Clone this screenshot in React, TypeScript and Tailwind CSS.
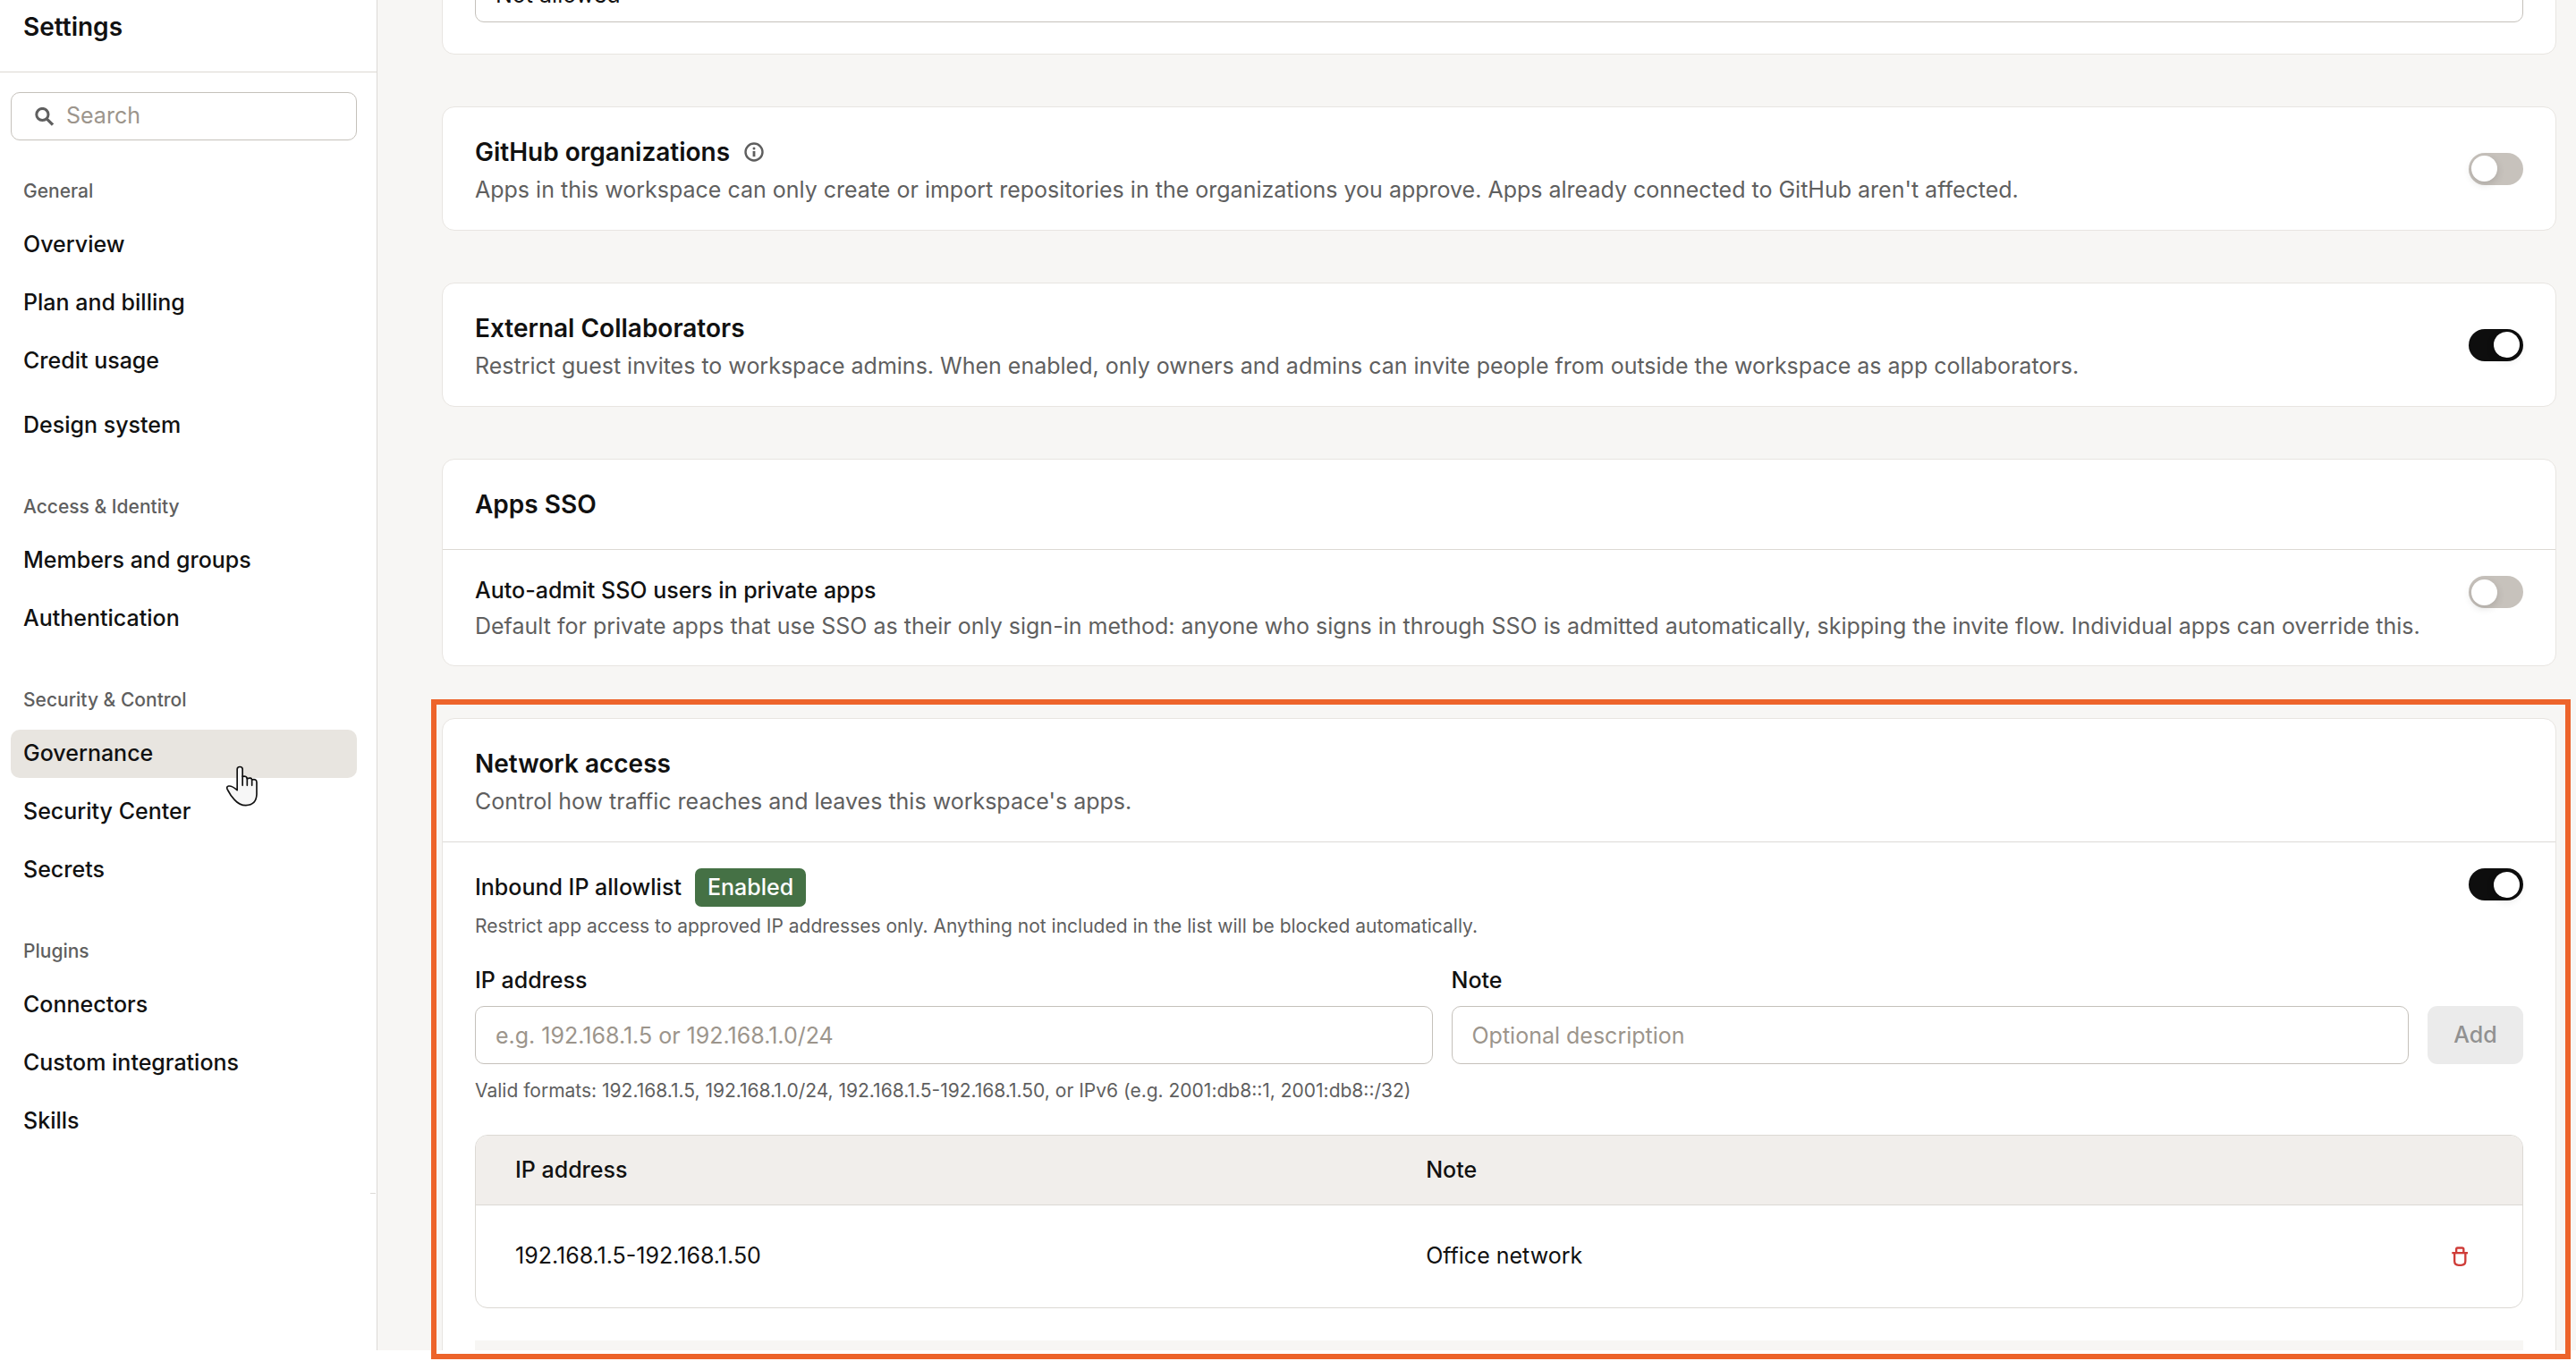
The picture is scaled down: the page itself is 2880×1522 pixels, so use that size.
import React, { useId, useState } from "react";

const sections = [
  { title: "General", items: ["Overview", "Plan and billing", "Credit usage", "Design system"] },
  { title: "Access & Identity", items: ["Members and groups", "Authentication"] },
  { title: "Security & Control", items: ["Governance", "Security Center", "Secrets"] },
  { title: "Plugins", items: ["Connectors", "Custom integrations", "Skills"] },
];

function SearchIcon() {
  return (
    <svg viewBox="0 0 21 21" className="size-[21px] shrink-0" fill="none" stroke="#5f5f5f" strokeWidth="3">
      <circle cx="8.4" cy="8" r="6.6" />
      <path d="M13 12.600 L20 19.600" strokeWidth="3.2" />
    </svg>
  );
}

function InfoIcon() {
  return (
    <svg viewBox="0 0 22 22" className="size-[22px] shrink-0" fill="none" stroke="#5f5f5f">
      <circle cx="11" cy="11" r="9.5" strokeWidth="2.4" />
      <circle cx="11" cy="7" r="1.5" fill="#5f5f5f" stroke="none" />
      <path d="M11 10 V16.2" strokeWidth="2.8" />
    </svg>
  );
}

function TrashIcon() {
  return (
    <svg viewBox="1014 996 72 72" className="size-6" fill="none" stroke="#cf3c38" strokeWidth="7">
      <path d="M1024 1020.5 H1077" />
      <path d="M1038.500 1020 V1008 Q1038.500 1003.500 1043 1003.500 H1058 Q1063 1003.500 1063 1008 V1020" />
      <path d="M1032.500 1020 V1048 Q1032.500 1061.500 1046 1061.500 H1055 Q1069 1061.500 1069 1048 V1020" />
    </svg>
  );
}

function HandCursor() {
  return (
    <svg
      viewBox="36 48 110 138"
      className="pointer-events-none absolute top-10 left-[240px] z-10 h-[46px] w-[37px]"
      fill="#f7f7f7"
      stroke="#111"
      strokeWidth="5"
      strokeLinejoin="round"
      strokeLinecap="round"
    >
      <path d="M75 131 V61 Q75 52.500 84 52.500 Q93 52.500 93 61 V85 Q107 82 108 92 Q123 87 124.500 96 Q140 92 140.500 104 V145 Q139 181 104 182 Q83 182 66 163 Q53 150 42 128 Q38 118 47 117 Q58 116 75 131 Z" />
      <path d="M93 84 V115 M108.500 92 V115 M124.500 97 V115" fill="none" />
    </svg>
  );
}

function Toggle({ label, initial = false }: { label: string; initial?: boolean }) {
  const [on, setOn] = useState(initial);
  return (
    <button
      type="button"
      role="switch"
      aria-checked={on}
      aria-label={label}
      onClick={() => setOn(!on)}
      className={
        on
          ? "flex h-9 w-[61px] shrink-0 items-center justify-end rounded-full bg-[#0e0e0e] px-1"
          : "flex h-9 w-[61px] shrink-0 items-center rounded-full bg-[#c7c2bc] px-[3px]"
      }
    >
      <span className="size-[29px] rounded-full bg-white shadow-[0_3px_10px_rgba(0,0,0,0.14)]" />
    </button>
  );
}

function Card({ children }: { children: React.ReactNode }) {
  return <section className="rounded-[14px] border border-[#e8e5e1] bg-white">{children}</section>;
}

function CardTitle({ children }: { children: React.ReactNode }) {
  return <h2 className="text-[28px] leading-[48px] font-semibold">{children}</h2>;
}

function Sidebar() {
  return (
    <aside className="w-[422px] shrink-0 border-r border-[#dcdad7] bg-white">
      <header className="h-[81px] border-b border-[#dcd8d2] px-[26px] pt-3">
        <h1 className="text-[28px] leading-9 font-semibold">Settings</h1>
      </header>
      <div className="pr-[22px] pl-3">
        <label className="mt-[22px] flex h-[54px] items-center gap-[14px] rounded-[10px] border border-[#c5c1bb] px-[26px]">
          <SearchIcon />
          <input
            type="search"
            aria-label="Search"
            placeholder="Search"
            className="w-full min-w-0 bg-transparent text-[25px] outline-none placeholder:text-[#9c958c]"
          />
        </label>
        <nav className="mt-[43px] flex flex-col gap-[50px]">
          {sections.map((section) => (
            <div key={section.title}>
              <h2 className="mb-[19px] px-[14px] text-[21px] leading-7 font-medium text-[#5f5f5f]">{section.title}</h2>
              <ul className="flex flex-col gap-[11px]">
                {section.items.map((item) => (
                  <li key={item} className={item === "Design system" ? "mt-[7px]" : item === "Governance" ? "relative" : ""}>
                    <a
                      href="#"
                      className={
                        item === "Governance"
                          ? "flex h-[54px] items-center rounded-[10px] bg-[#e8e5e0] px-[14px] text-[25px] font-medium"
                          : "flex h-[54px] items-center rounded-[10px] px-[14px] text-[25px] font-medium"
                      }
                    >
                      {item}
                    </a>
                    {item === "Governance" && <HandCursor />}
                  </li>
                ))}
              </ul>
            </div>
          ))}
        </nav>
      </div>
      <div className="mt-[53px] mr-px ml-auto h-px w-[6px] bg-[#dcdad7]" />
    </aside>
  );
}

function Field({ label, placeholder }: { label: string; placeholder: string }) {
  const id = useId();
  return (
    <div className="flex-1">
      <label htmlFor={id} className="block text-[25px] leading-9 font-medium">
        {label}
      </label>
      <input
        id={id}
        type="text"
        placeholder={placeholder}
        className="mt-[11px] block h-[65px] w-full rounded-[10px] border border-[#c5c1bb] px-[22px] text-[25px] outline-none placeholder:text-[#9c958c]"
      />
    </div>
  );
}

function NetworkAccess() {
  return (
    <Card>
      <div className="border-b border-[#dcdad7] px-9 py-[26px]">
        <CardTitle>Network access</CardTitle>
        <p className="text-[25px] leading-[37px] text-[#5f5f5f]">Control how traffic reaches and leaves this workspace's apps.</p>
      </div>
      <div className="px-9 pt-[29px]">
        <div className="flex items-start justify-between">
          <div>
            <div className="flex items-center gap-[15px]">
              <h3 className="text-[25px] font-medium">Inbound IP allowlist</h3>
              <span className="rounded-[7px] bg-[#457145] px-[14px] text-[25px] leading-[43px] font-medium text-white">Enabled</span>
            </div>
            <p className="mt-1 text-[21px] leading-9 text-[#5f5f5f]">
              Restrict app access to approved IP addresses only. Anything not included in the list will be blocked automatically.
            </p>
          </div>
          <Toggle label="Inbound IP allowlist" initial />
        </div>
        <form className="mt-6 flex items-end gap-[21px]" onSubmit={(e) => e.preventDefault()}>
          <Field label="IP address" placeholder="e.g. 192.168.1.5 or 192.168.1.0/24" />
          <Field label="Note" placeholder="Optional description" />
          <button type="submit" disabled className="h-[65px] w-[107px] rounded-[11px] bg-[#ebebeb] text-[25px] font-medium text-[#919191]">
            Add
          </button>
        </form>
        <p className="mt-3 text-[21px] leading-9 text-[#5f5f5f]">
          Valid formats: 192.168.1.5, 192.168.1.0/24, 192.168.1.5-192.168.1.50, or IPv6 (e.g. 2001:db8::1, 2001:db8::/32)
        </p>
        <div className="mt-[31px] overflow-hidden rounded-[14px] border border-[#dcd9d4]">
          <table className="w-full table-fixed text-left text-[25px]">
            <thead className="border-b border-[#dcd9d4] bg-[#f1eeeb]">
              <tr className="h-[77px]">
                <th className="w-[44.5%] px-[44px] font-medium">IP address</th>
                <th className="px-[44px] font-medium">Note</th>
                <th className="w-[140px]" aria-label="Actions" />
              </tr>
            </thead>
            <tbody>
              <tr className="h-[115px]">
                <td className="px-[44px]">192.168.1.5-192.168.1.50</td>
                <td className="px-[44px]">Office network</td>
                <td className="px-[58px]">
                  <button type="button" aria-label="Delete 192.168.1.5-192.168.1.50" className="block">
                    <TrashIcon />
                  </button>
                </td>
              </tr>
            </tbody>
          </table>
        </div>
        <div className="mt-9 h-20 bg-[#f7f6f4]" />
      </div>
    </Card>
  );
}

export default function App() {
  return (
    <div className="relative flex h-screen overflow-hidden bg-white pb-3 font-['Inter',sans-serif] text-[#111111]">
      <Sidebar />
      <main className="min-w-0 flex-1 overflow-hidden bg-[#f7f6f4] pr-[22px] pl-[72px]">
        <div className="-mt-[77px] flex flex-col gap-[58px]">
          <Card>
            <div className="px-9 pt-9 pb-[35px]">
              <select aria-label="Public sharing" className="block h-[65px] w-full appearance-none rounded-[10px] border border-[#c5c1bb] px-[22px] pt-1 text-[25px]">
                <option>Not allowed</option>
              </select>
            </div>
          </Card>

          <Card>
            <div className="flex items-center justify-between px-9 py-[26px]">
              <div>
                <div className="flex items-center gap-4">
                  <CardTitle>GitHub organizations</CardTitle>
                  <InfoIcon />
                </div>
                <p className="text-[25px] leading-[37px] text-[#5f5f5f]">
                  Apps in this workspace can only create or import repositories in the organizations you approve. Apps already connected to GitHub aren't affected.
                </p>
              </div>
              <Toggle label="GitHub organizations" />
            </div>
          </Card>

          <Card>
            <div className="flex items-center justify-between px-9 py-[26px]">
              <div>
                <CardTitle>External Collaborators</CardTitle>
                <p className="text-[25px] leading-[37px] text-[#5f5f5f]">
                  Restrict guest invites to workspace admins. When enabled, only owners and admins can invite people from outside the workspace as app collaborators.
                </p>
              </div>
              <Toggle label="External Collaborators" initial />
            </div>
          </Card>

          <Card>
            <div className="border-b border-[#dcd9d4] px-9 py-[26px]">
              <CardTitle>Apps SSO</CardTitle>
            </div>
            <div className="flex items-start justify-between px-9 pt-[25px] pb-6">
              <div>
                <h3 className="text-[25px] leading-10 font-medium">Auto-admit SSO users in private apps</h3>
                <p className="text-[25px] leading-10 text-[#5f5f5f]">
                  Default for private apps that use SSO as their only sign-in method: anyone who signs in through SSO is admitted automatically, skipping the invite flow. Individual apps can override this.
                </p>
              </div>
              <div className="pt-1">
                <Toggle label="Auto-admit SSO users in private apps" />
              </div>
            </div>
          </Card>

          <NetworkAccess />
        </div>
      </main>
      <div className="pointer-events-none absolute top-[782px] right-[6px] bottom-[2px] left-[482px] border-[6px] border-[#ed642b]" />
    </div>
  );
}
